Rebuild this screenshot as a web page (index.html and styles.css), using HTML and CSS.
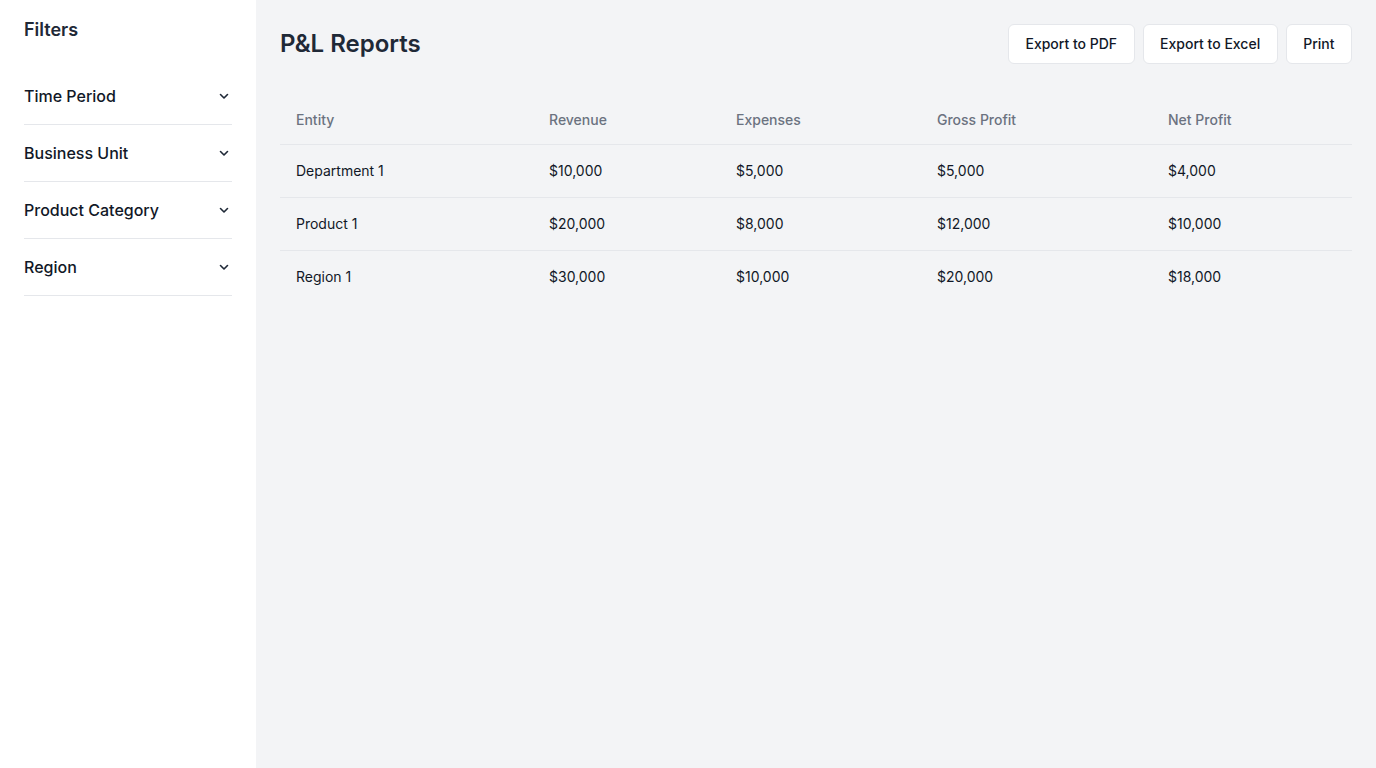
FILE: index.html
```html
<!DOCTYPE html>
<html lang="en">
<head>
<meta charset="utf-8">
<title>P&amp;L Reports</title>
<link rel="stylesheet" href="styles.css">
</head>
<body>
<div class="app">
  <aside class="sidebar">
    <h2 class="sidebar-title">Filters</h2>
    <div class="filter">
      <span>Time Period</span>
      <svg class="chev" viewBox="0 0 16 16" width="16" height="16"><path d="M4.5 6.5 8 10l3.5-3.5" fill="none" stroke="currentColor" stroke-width="1.6" stroke-linecap="round" stroke-linejoin="round"/></svg>
    </div>
    <div class="filter">
      <span>Business Unit</span>
      <svg class="chev" viewBox="0 0 16 16" width="16" height="16"><path d="M4.5 6.5 8 10l3.5-3.5" fill="none" stroke="currentColor" stroke-width="1.6" stroke-linecap="round" stroke-linejoin="round"/></svg>
    </div>
    <div class="filter">
      <span>Product Category</span>
      <svg class="chev" viewBox="0 0 16 16" width="16" height="16"><path d="M4.5 6.5 8 10l3.5-3.5" fill="none" stroke="currentColor" stroke-width="1.6" stroke-linecap="round" stroke-linejoin="round"/></svg>
    </div>
    <div class="filter">
      <span>Region</span>
      <svg class="chev" viewBox="0 0 16 16" width="16" height="16"><path d="M4.5 6.5 8 10l3.5-3.5" fill="none" stroke="currentColor" stroke-width="1.6" stroke-linecap="round" stroke-linejoin="round"/></svg>
    </div>
  </aside>
  <main class="main">
    <header class="topbar">
      <h1 class="title">P&amp;L Reports</h1>
      <div class="actions">
        <button class="btn">Export to PDF</button>
        <button class="btn">Export to Excel</button>
        <button class="btn">Print</button>
      </div>
    </header>
    <table class="report">
      <colgroup>
        <col class="c1"><col class="c2"><col class="c3"><col class="c4"><col class="c5">
      </colgroup>
      <thead>
        <tr><th>Entity</th><th>Revenue</th><th>Expenses</th><th>Gross Profit</th><th>Net Profit</th></tr>
      </thead>
      <tbody>
        <tr><td>Department 1</td><td>$10,000</td><td>$5,000</td><td>$5,000</td><td>$4,000</td></tr>
        <tr><td>Product 1</td><td>$20,000</td><td>$8,000</td><td>$12,000</td><td>$10,000</td></tr>
        <tr><td>Region 1</td><td>$30,000</td><td>$10,000</td><td>$20,000</td><td>$18,000</td></tr>
      </tbody>
    </table>
  </main>
</div>
</body>
</html>
```

FILE: styles.css
```css
* { box-sizing: border-box; }
html, body { margin: 0; padding: 0; height: 100%; }
body {
  font-family: Inter, "Noto Sans", "Liberation Sans", sans-serif;
  color: #111827;
  background: #f3f4f6;
}
.app {
  display: flex;
  min-height: 768px;
}
.sidebar {
  width: 256px;
  flex: 0 0 256px;
  background: #ffffff;
  padding: 16px 24px;
}
.sidebar-title {
  margin: 0 0 24px;
  font-size: 18px;
  line-height: 28px;
  font-weight: 600;
  color: #1f2937;
}
.filter {
  display: flex;
  align-items: center;
  justify-content: space-between;
  padding: 16px 0;
  border-bottom: 1px solid #e5e7eb;
  font-size: 16px;
  line-height: 24px;
  font-weight: 500;
  color: #111827;
}
.chev { color: #1f2937; flex: none; }
.main {
  flex: 1;
  padding: 24px;
  background: #f3f4f6;
}
.topbar {
  display: flex;
  align-items: center;
  justify-content: space-between;
  margin-bottom: 32px;
}
.title {
  margin: 0;
  font-size: 24px;
  line-height: 32px;
  font-weight: 600;
  color: #1f2937;
}
.actions { display: flex; gap: 8px; }
.btn {
  height: 40px;
  padding: 9px 16.5px;
  font-family: inherit;
  font-size: 14px;
  line-height: 20px;
  font-weight: 500;
  color: #111827;
  background: #ffffff;
  border: 1px solid #e5e7eb;
  border-radius: 6px;
}
.report {
  width: 100%;
  border-collapse: collapse;
  font-size: 14px;
}
.c1 { width: 253px; }
.c2 { width: 187px; }
.c3 { width: 201px; }
.c4 { width: 231px; }
.report th {
  text-align: left;
  font-weight: 500;
  color: #6b7280;
  padding: 12px 16px;
  line-height: 24px;
  border-bottom: 1px solid #e5e7eb;
}
.report td {
  padding: 16px;
  line-height: 20px;
  color: #111827;
  border-bottom: 1px solid #e5e7eb;
}
.report tbody tr:last-child td { border-bottom: none; }
```
